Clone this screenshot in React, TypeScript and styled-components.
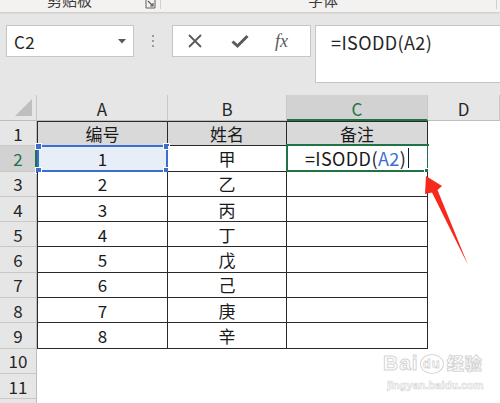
import React from 'react';
import styled, { createGlobalStyle } from 'styled-components';

const GlobalStyle = createGlobalStyle`
    html, body {
        margin: 0;
        padding: 0;
        background: #ffffff;
        overflow: hidden;
    }
`

const Page = styled.div`
    position: relative;
    width: 500px;
    height: 403px;
    overflow: hidden;
    font-family: "Noto Sans CJK SC", "Liberation Sans", sans-serif;
    color: #1f1f1f;
`

const Ribbon = styled.div`
    position: relative;
    z-index: 2;
    height: 12px;
    display: flex;
    align-items: flex-start;
    background: #f3f2f1;
    box-shadow: 0 1px 2px rgba(0, 0, 0, 0.14);
    overflow: hidden;
`

const GroupLabel = styled.div<{ $width: number; $pad: number }>`
    width: ${p => p.$width}px;
    padding-left: ${p => p.$pad}px;
    box-sizing: border-box;
    display: flex;
    align-items: flex-start;
    border-right: 1px solid #d2d0ce;
    height: 9px;
    font-size: 15px;
    line-height: 15px;
    color: #3b3a39;

    span {
        margin-top: -8px;
    }
`

const Launcher = styled.svg`
    margin-left: auto;
    margin-right: 4px;
`

const FormulaArea = styled.div`
    height: 83px;
    box-sizing: border-box;
    padding: 13px 0 0 6px;
    background: #e6e6e6;
    display: flex;
    align-items: flex-start;
`

const NameBox = styled.div`
    width: 128px;
    height: 32px;
    box-sizing: border-box;
    background: #fff;
    border: 1px solid #c6c6c6;
    display: flex;
    align-items: center;
    padding: 0 7px 0 7px;
    font-size: 17px;
    letter-spacing: 0.4px;
    color: #262626;

    svg {
        margin-left: auto;
    }
`

const Grip = styled.div`
    width: 38px;
    height: 32px;
    display: flex;
    flex-direction: column;
    align-items: center;
    justify-content: center;
    gap: 3px;

    i {
        width: 2px;
        height: 2px;
        background: #9a9a9a;
    }
`

const Buttons = styled.div`
    width: 139px;
    height: 32px;
    box-sizing: border-box;
    background: #fff;
    border: 1px solid #c6c6c6;
    display: flex;
    align-items: center;
    padding-left: 14px;
    gap: 28px;
`

const Fx = styled.span`
    font-family: "Liberation Serif", serif;
    font-style: italic;
    font-size: 18px;
    color: #5a5a5a;
    margin-left: -2px;
`

const FormulaInput = styled.div`
    flex: 1;
    height: 58px;
    margin-left: 4px;
    box-sizing: border-box;
    background: #fff;
    border: 1px solid #c6c6c6;
    border-right: none;
    padding: 3px 0 0 15px;
    font-size: 18px;
    letter-spacing: 0.4px;
    line-height: 26px;
    color: #262626;
`

const Sheet = styled.div`
    display: grid;
    grid-template-columns: 37px 131px 119px 141px 72px;
    grid-template-rows: 26px;
    grid-auto-rows: 25.3px;
    background: #fff;
`

const Corner = styled.div`
    background: #e6e6e6;
    border-right: 1px solid #c8c8c8;
    border-bottom: 1px solid #bdbdbd;
    display: flex;
    align-items: flex-end;
    justify-content: flex-end;
    padding: 0 4px 4px 0;
`

const ColHead = styled.div<{ $active?: boolean }>`
    display: flex;
    align-items: center;
    justify-content: center;
    background: ${p => p.$active ? '#d2d2d2' : '#e6e6e6'};
    color: ${p => p.$active ? '#217346' : '#262626'};
    border-right: 1px solid #c8c8c8;
    border-bottom: ${p => p.$active ? '2px solid #217346' : '1px solid #bdbdbd'};
    font-size: 17px;
    padding-top: 2px;
`

const RowHead = styled.div<{ $active?: boolean }>`
    display: flex;
    align-items: center;
    justify-content: center;
    background: ${p => p.$active ? '#d2d2d2' : '#e6e6e6'};
    color: ${p => p.$active ? '#217346' : '#262626'};
    border-right: ${p => p.$active ? '2px solid #217346' : '1px solid #bdbdbd'};
    border-bottom: 1px solid #c8c8c8;
    font-size: 17px;
    padding-left: ${p => p.$active ? '1px' : '0'};
`

const Cell = styled.div<{ $table?: boolean; $left?: boolean; $top?: boolean; $fill?: string }>`
    position: relative;
    display: flex;
    align-items: center;
    justify-content: center;
    font-size: 17px;
    color: #1a1a1a;
    background: ${p => p.$fill ?? '#fff'};
    border-right: ${p => p.$table ? '1px solid #2a2a2a' : 'none'};
    border-bottom: ${p => p.$table ? '1px solid #2a2a2a' : 'none'};
    border-left: ${p => p.$left ? '1px solid #2a2a2a' : 'none'};
    border-top: ${p => p.$top ? '1px solid #2a2a2a' : 'none'};
`

const RefFrame = styled.div`
    position: absolute;
    inset: -1px -1px -1px -1px;
    border: 2px solid #3a6fd0;
    pointer-events: none;
`

const Handle = styled.i<{ $x: 'left' | 'right'; $y: 'top' | 'bottom'; $color: string }>`
    position: absolute;
    ${p => p.$x}: -4px;
    ${p => p.$y}: -4px;
    width: 5px;
    height: 5px;
    background: ${p => p.$color};
    border: 1px solid #fff;
`

const ActiveFrame = styled.div`
    position: absolute;
    inset: -2px -2px -1px -1px;
    border: 2px solid #217346;
    pointer-events: none;
`

const FormulaText = styled.span`
    font-size: 18px;
    letter-spacing: 0.4px;
`

const Ref = styled.span`
    color: #3a6fd0;
`

const Caret = styled.span`
    display: inline-block;
    width: 1px;
    height: 20px;
    background: #1a1a1a;
    margin-left: 2px;
    vertical-align: middle;
`

const Arrow = styled.svg`
    position: absolute;
    left: 420px;
    top: 172px;
`

const Watermark = styled.div`
    position: absolute;
    left: 383px;
    top: 352px;
    color: #fff;
    -webkit-text-stroke: 1px #d6d6d6;
    font-family: "Liberation Sans", sans-serif;
    font-weight: bold;
    display: flex;
    flex-direction: column;
    align-items: flex-start;
`

const MarkTop = styled.div`
    display: flex;
    align-items: flex-end;
    font-size: 21px;
    line-height: 22px;
    letter-spacing: 1px;

    b {
        font-family: "Noto Sans CJK SC", sans-serif;
        font-size: 17px;
        margin-left: 2px;
    }
`

const Paw = styled.span`
    position: relative;
    display: inline-flex;
    align-items: center;
    justify-content: center;
    width: 22px;
    height: 18px;
    border: 1px solid #d6d6d6;
    border-radius: 50%;
    font-size: 13px;
    -webkit-text-stroke: 0.8px #d6d6d6;
    margin: 0 1px;
`

const MarkUrl = styled.div`
    font-size: 11px;
    line-height: 14px;
    margin-top: 4px;
    margin-left: 4px;
    -webkit-text-stroke: 0.6px #d6d6d6;
`

const rows: string[][] = [
    ['编号', '姓名', '备注'],
    ['1', '甲', ''],
    ['2', '乙', ''],
    ['3', '丙', ''],
    ['4', '丁', ''],
    ['5', '戊', ''],
    ['6', '己', ''],
    ['7', '庚', ''],
    ['8', '辛', ''],
]

const renderTableCell = (r: number, c: number, text: string) => {
    const fill = r === 0 ? '#d9d9d9' : r === 1 && c === 0 ? '#e8eef8' : undefined;
    return (
        <Cell key={`${r}-${c}`} $table $left={c === 0} $top={r === 0} $fill={fill}>
            {r === 1 && c === 2 ? (
                <>
                    <FormulaText>=ISODD(<Ref>A2</Ref>)</FormulaText>
                    <Caret />
                    <ActiveFrame />
                    <Handle $x="right" $y="bottom" $color="#217346" />
                </>
            ) : text}
            {r === 1 && c === 0 && (
                <RefFrame>
                    <Handle $x="left" $y="top" $color="#3a6fd0" />
                    <Handle $x="right" $y="top" $color="#3a6fd0" />
                    <Handle $x="left" $y="bottom" $color="#3a6fd0" />
                    <Handle $x="right" $y="bottom" $color="#3a6fd0" />
                </RefFrame>
            )}
        </Cell>
    );
}

export default function App() {
    const sheetRows = [];
    for (let r = 0; r < 12; r++) {
        sheetRows.push(<RowHead key={`h${r}`} $active={r === 1}>{r + 1}</RowHead>);
        for (let c = 0; c < 3; c++) {
            if (r < rows.length) sheetRows.push(renderTableCell(r, c, rows[r][c]));
            else sheetRows.push(<Cell key={`${r}-${c}`} />);
        }
        sheetRows.push(<Cell key={`${r}-d`} />);
    }

    return (
        <Page>
            <GlobalStyle />
            <Ribbon>
                <GroupLabel $width={161} $pad={47}>
                    <span>剪贴板</span>
                    <Launcher width="11" height="9" viewBox="0 0 11 9">
                        <path d="M1 0 V8 H10 V0" fill="none" stroke="#605e5c" strokeWidth="1" />
                        <path d="M3 1 L8 6 M8 3 V6 H5" fill="none" stroke="#605e5c" strokeWidth="1.2" />
                    </Launcher>
                </GroupLabel>
                <GroupLabel $width={336} $pad={147}>
                    <span>字体</span>
                </GroupLabel>
            </Ribbon>
            <FormulaArea>
                <NameBox>
                    C2
                    <svg width="8" height="5" viewBox="0 0 8 5">
                        <path d="M0 0 H8 L4 4.5 Z" fill="#595959" />
                    </svg>
                </NameBox>
                <Grip><i /><i /><i /></Grip>
                <Buttons>
                    <svg width="16" height="16" viewBox="0 0 16 16">
                        <path d="M2 2 L14 14 M14 2 L2 14" stroke="#5a5a5a" strokeWidth="1.8" />
                    </svg>
                    <svg width="18" height="16" viewBox="0 0 18 16">
                        <path d="M1.5 8.5 L6.5 13 L16.5 3" fill="none" stroke="#5a5a5a" strokeWidth="3" />
                    </svg>
                    <Fx>fx</Fx>
                </Buttons>
                <FormulaInput>=ISODD(A2)</FormulaInput>
            </FormulaArea>
            <Sheet>
                <Corner>
                    <svg width="17" height="17" viewBox="0 0 17 17">
                        <path d="M17 0 V17 H0 Z" fill="#bfbfbf" />
                    </svg>
                </Corner>
                <ColHead>A</ColHead>
                <ColHead>B</ColHead>
                <ColHead $active>C</ColHead>
                <ColHead>D</ColHead>
                {sheetRows}
            </Sheet>
            <Arrow width="52" height="98" viewBox="0 0 52 98">
                <path d="M6 4 L22 14 L17.5 18 L48 93 L12 20.5 L5 22 Z" fill="#f7281c" />
            </Arrow>
            <Watermark>
                <MarkTop>
                    Bai<Paw>du</Paw><b>经验</b>
                </MarkTop>
                <MarkUrl>jingyan.baidu.com</MarkUrl>
            </Watermark>
        </Page>
    );
}
